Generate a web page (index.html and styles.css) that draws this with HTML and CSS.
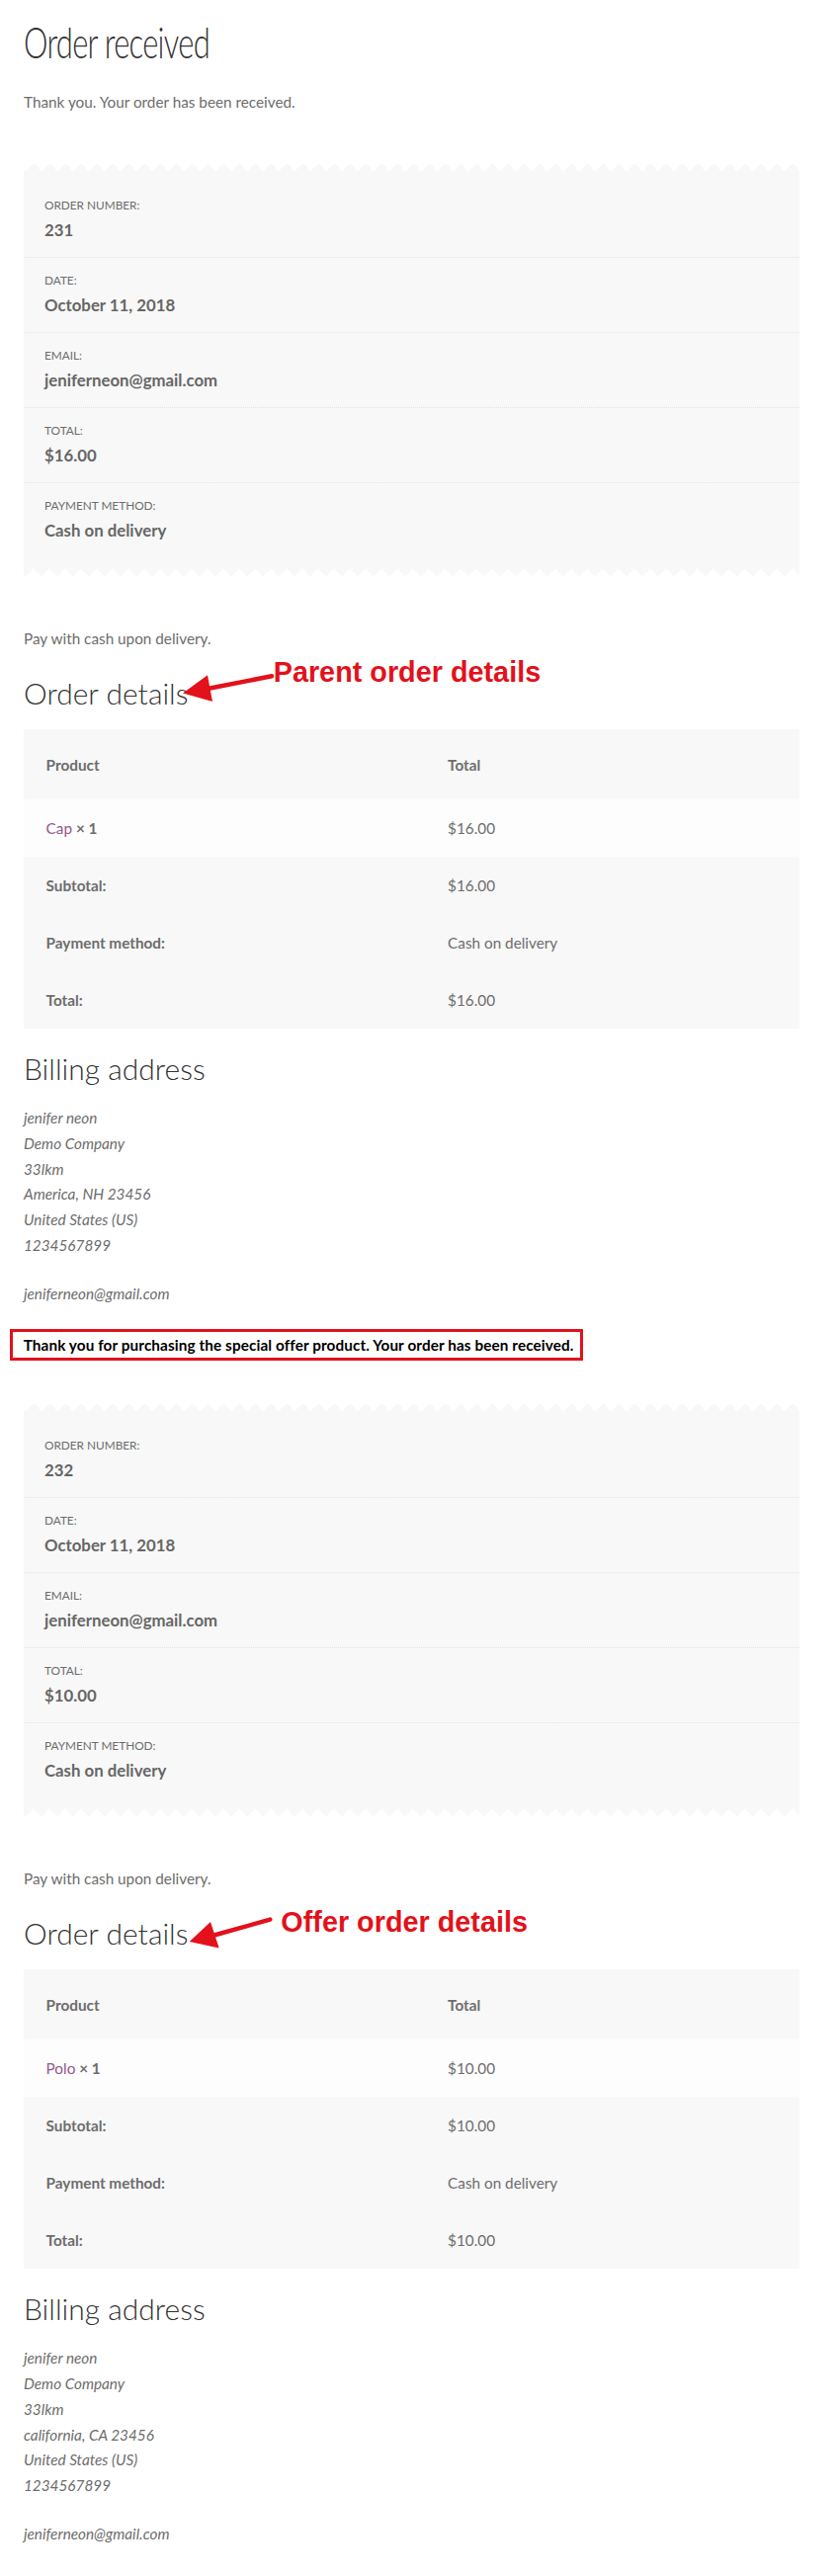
FILE: index.html
```html
<!DOCTYPE html>
<html lang="en">
<head>
<meta charset="utf-8">
<title>Order received</title>
<link rel="stylesheet" href="styles.css">
</head>
<body>
<main class="page">
  <h1 class="page-title">Order received</h1>
  <p class="notice">Thank you. Your order has been received.</p>

  <section class="order">
    <ul class="overview">
      <li>Order number: <strong>231</strong></li>
      <li>Date: <strong>October 11, 2018</strong></li>
      <li>Email: <strong>jeniferneon@gmail.com</strong></li>
      <li>Total: <strong>$16.00</strong></li>
      <li>Payment method: <strong>Cash on delivery</strong></li>
    </ul>
    <p class="pay-note">Pay with cash upon delivery.</p>
    <section class="details">
      <div class="heading-wrap">
        <h2 class="section-title">Order details</h2>
        <svg class="callout-arrow" viewBox="0 0 300 80" width="300" height="80" aria-hidden="true">
          <line x1="251" y1="33.2" x2="186" y2="46" stroke="#e3111b" stroke-width="4.5" stroke-linecap="round"/>
          <polygon points="161,50.6 186,32.2 191,58.9" fill="#e3111b"/>
        </svg>
        <span class="callout-text callout-parent">Parent order details</span>
      </div>
      <table class="details-table">
        <colgroup><col class="col-product"><col class="col-total"></colgroup>
        <thead>
          <tr><th>Product</th><th>Total</th></tr>
        </thead>
        <tbody>
          <tr><td><a class="product-link" href="#">Cap</a> <strong class="qty">× 1</strong></td><td>$16.00</td></tr>
        </tbody>
        <tfoot>
          <tr><th>Subtotal:</th><td>$16.00</td></tr>
          <tr><th>Payment method:</th><td>Cash on delivery</td></tr>
          <tr><th>Total:</th><td>$16.00</td></tr>
        </tfoot>
      </table>
    </section>
    <section class="billing">
      <h2 class="section-title">Billing address</h2>
      <address class="address">jenifer neon<br>Demo Company<br>33lkm<br>America, NH 23456<br>United States (US)<p class="phone">1234567899</p><p class="email">jeniferneon@gmail.com</p></address>
    </section>
  </section>

  <p class="offer-notice">Thank you for purchasing the special offer product. Your order has been received.</p>

  <section class="order">
    <ul class="overview">
      <li>Order number: <strong>232</strong></li>
      <li>Date: <strong>October 11, 2018</strong></li>
      <li>Email: <strong>jeniferneon@gmail.com</strong></li>
      <li>Total: <strong>$10.00</strong></li>
      <li>Payment method: <strong>Cash on delivery</strong></li>
    </ul>
    <p class="pay-note">Pay with cash upon delivery.</p>
    <section class="details">
      <div class="heading-wrap">
        <h2 class="section-title">Order details</h2>
        <svg class="callout-arrow" viewBox="0 0 300 80" width="300" height="80" aria-hidden="true">
          <line x1="249.3" y1="36.6" x2="191" y2="53" stroke="#e3111b" stroke-width="4.5" stroke-linecap="round"/>
          <polygon points="167.7,58.9 189,38.9 197.7,65.6" fill="#e3111b"/>
        </svg>
        <span class="callout-text callout-offer">Offer order details</span>
      </div>
      <table class="details-table">
        <colgroup><col class="col-product"><col class="col-total"></colgroup>
        <thead>
          <tr><th>Product</th><th>Total</th></tr>
        </thead>
        <tbody>
          <tr><td><a class="product-link" href="#">Polo</a> <strong class="qty">× 1</strong></td><td>$10.00</td></tr>
        </tbody>
        <tfoot>
          <tr><th>Subtotal:</th><td>$10.00</td></tr>
          <tr><th>Payment method:</th><td>Cash on delivery</td></tr>
          <tr><th>Total:</th><td>$10.00</td></tr>
        </tfoot>
      </table>
    </section>
    <section class="billing">
      <h2 class="section-title">Billing address</h2>
      <address class="address">jenifer neon<br>Demo Company<br>33lkm<br>california, CA 23456<br>United States (US)<p class="phone">1234567899</p><p class="email">jeniferneon@gmail.com</p></address>
    </section>
  </section>
</main>
</body>
</html>
```

FILE: styles.css
```css
* { box-sizing: border-box; }

html, body {
  margin: 0;
  padding: 0;
  background: #ffffff;
}

body {
  font-family: Lato, "Open Sans", "Liberation Sans", sans-serif;
  font-size: 15.3px;
  line-height: 26px;
  color: #6d6d6d;
}

.page {
  width: 847px;
  padding: 17px 38px 29px 24px;
}

.page-title {
  margin: 0 0 21px;
  font-size: 43px;
  line-height: 52px;
  font-weight: 300;
  letter-spacing: -1px;
  color: #333333;
  transform: scaleX(0.72);
  transform-origin: 0 50%;
}

.notice {
  margin: 0 0 57px;
}

/* order overview with zig-zag edges */
.overview {
  position: relative;
  list-style: none;
  margin: 0 0 58px;
  padding: 12px 0 11px;
  background: #f8f8f8;
}

.overview::before,
.overview::after {
  content: "";
  position: absolute;
  left: 0;
  width: 100%;
  height: 8px;
}

.overview::before {
  top: -8px;
  background: conic-gradient(from 135deg at 50% 0, #f8f8f8 90deg, transparent 0) 2px 0 / 16px 8px repeat-x;
}

.overview::after {
  bottom: -8px;
  background: conic-gradient(from -45deg at 50% 100%, #f8f8f8 90deg, transparent 0) 10px 0 / 16px 8px repeat-x;
}

.overview li {
  padding: 12px 21px 13px;
  font-size: 11.8px;
  line-height: 21px;
  text-transform: uppercase;
  border-bottom: 1px dotted #e3e3e3;
}

.overview li:last-child {
  border-bottom: 0;
}

.overview strong {
  display: block;
  font-size: 16.8px;
  line-height: 29px;
  font-weight: 700;
  text-transform: none;
  color: #666666;
}

.pay-note {
  margin: 0 0 22px;
}

/* headings */
.section-title {
  margin: 0;
  font-size: 30px;
  line-height: 40px;
  font-weight: 300;
  color: #333333;
}

.heading-wrap {
  position: relative;
  margin: 0 0 17px;
}

.callout-arrow {
  position: absolute;
  left: 0;
  top: -30px;
  overflow: visible;
}

.callout-text {
  position: absolute;
  font-family: "Liberation Sans", Arial, sans-serif;
  font-weight: 700;
  font-size: 28.8px;
  line-height: 28.8px;
  color: #e3111b;
  white-space: nowrap;
}

.callout-parent {
  left: 252.7px;
  top: -15.5px;
}

.callout-offer {
  left: 260.3px;
  top: -4.8px;
}

/* details table */
.details-table {
  width: 100%;
  table-layout: fixed;
  border-collapse: separate;
  border-spacing: 0;
  margin: 0 0 20px;
}

.col-product { width: 406.5px; }

.details-table th,
.details-table td {
  padding: 16px 22.6px;
  text-align: left;
  vertical-align: top;
  line-height: 26px;
  font-weight: 400;
  background: #f8f8f8;
}

.details-table thead th {
  padding: 22.5px 22.6px;
  vertical-align: middle;
  font-weight: 700;
}

.details-table tbody td {
  background: #fdfdfd;
}

.details-table tfoot th {
  font-weight: 700;
}

.product-link {
  color: #96588a;
  text-decoration: none;
}

.qty {
  font-weight: 700;
}

/* billing */
.billing .section-title {
  margin-bottom: 18px;
}

.address {
  margin: 0;
  font-style: italic;
  line-height: 25.8px;
}

.address p {
  margin: 0;
}

.address .phone {
  margin-bottom: 23.2px;
}

/* annotated notice */
.offer-notice {
  width: fit-content;
  margin: 22px 0 51.5px -14.3px;
  padding: 0 6.7px 0 11px;
  border: 3px solid #e3111b;
  background: #ffffff;
  color: #000000;
  font-weight: 700;
  line-height: 26px;
  letter-spacing: 0.1px;
}
```
